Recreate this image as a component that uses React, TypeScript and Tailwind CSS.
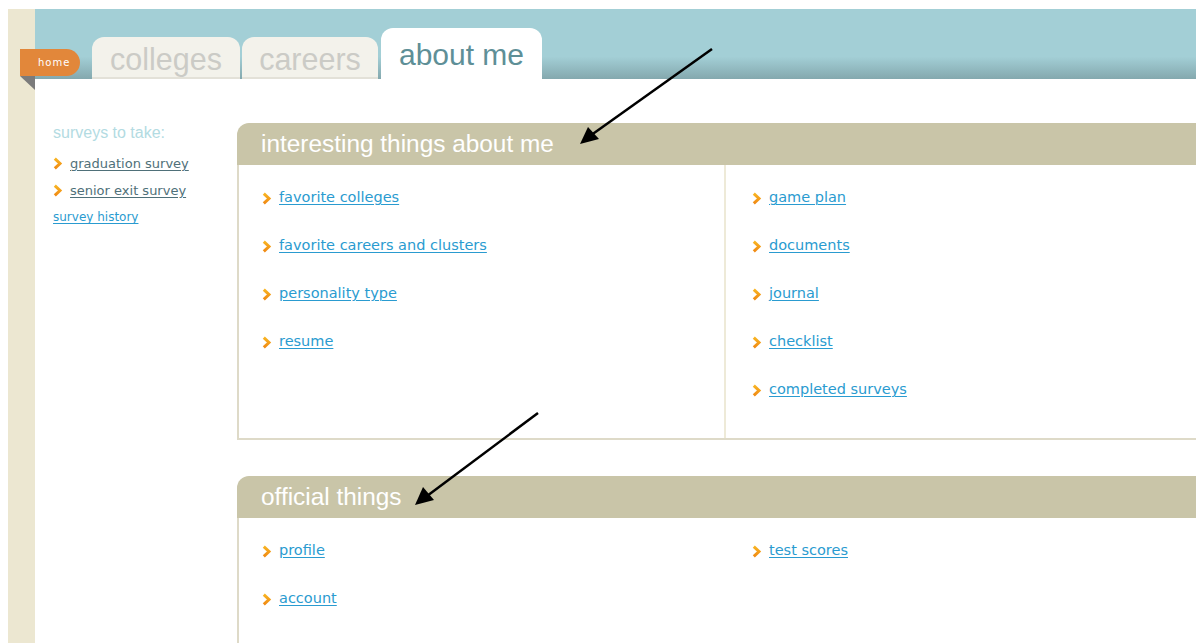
import React from "react";

const Chevron = () => (
  <svg width="10" height="13" viewBox="0 0 10 13" className="shrink-0">
    <defs>
      <linearGradient id="chev" x1="0" y1="0" x2="0" y2="1">
        <stop offset="0" stopColor="#f8b422" />
        <stop offset="1" stopColor="#f08a14" />
      </linearGradient>
    </defs>
    <polyline points="1.8,1.6 7,6.5 1.8,11.4" fill="none" stroke="url(#chev)" strokeWidth="3" strokeLinejoin="miter" />
  </svg>
);

const Item = ({ label }: { label: string }) => (
  <div className="h-[48px] flex items-center">
    <Chevron />
    <a
      href="#"
      className="ml-[7px] text-[14.5px] text-[#2a9bd0] underline underline-offset-2 decoration-1"
      style={{ fontFamily: '"DejaVu Sans", Verdana, sans-serif' }}
    >
      {label}
    </a>
  </div>
);

const Section = ({
  title,
  left,
  right,
  divided,
  bodyClass,
}: {
  title: string;
  left: string[];
  right: string[];
  divided?: boolean;
  bodyClass: string;
}) => (
  <section className="w-[1000px]">
    <div className="h-[42px] bg-[#c9c5a8] rounded-tl-[12px] flex items-center pl-[24px]">
      <h2 className="text-[24.4px] text-white leading-none" style={{ fontFamily: '"Liberation Sans", Arial, sans-serif' }}>
        {title}
      </h2>
    </div>
    <div className={`flex border-l-2 border-[#dedac8] ${bodyClass}`}>
      <div className={`w-[487px] pl-[23px] pt-[9px] ${divided ? "border-r-2 border-[#eeead8]" : ""}`}>
        {left.map((l) => (
          <Item key={l} label={l} />
        ))}
      </div>
      <div className="flex-1 pl-[26px] pt-[9px]">
        {right.map((l) => (
          <Item key={l} label={l} />
        ))}
      </div>
    </div>
  </section>
);

export default function App() {
  return (
    <div
      className="relative w-[1196px] h-[643px] overflow-hidden bg-white pt-[9px] pl-[8px]"
      style={{ fontFamily: '"Liberation Sans", Arial, sans-serif' }}
    >
      <div className="flex h-[634px]">
        {/* left beige rail */}
        <div className="w-[27px] shrink-0 bg-[#ece7d1]" />

        <div className="flex-1 flex flex-col min-w-0">
          {/* banner with tabs */}
          <div className="h-[70px] shrink-0 bg-[linear-gradient(to_bottom,#a3cfd6_0%,#a3cfd6_68%,#84a8ae_100%)] flex items-end pl-[57px]">
            <div className="w-[148px] h-[42px] bg-[#f3f2eb] border-b-2 border-[#e3e1d8] rounded-t-[12px] flex items-center justify-center">
              <span className="text-[30.5px] text-[#cbcbc6] leading-none mt-[4px]">colleges</span>
            </div>
            <div className="ml-[2px] w-[136px] h-[42px] bg-[#f3f2eb] border-b-2 border-[#e3e1d8] rounded-t-[12px] flex items-center justify-center">
              <span className="text-[30.5px] text-[#cbcbc6] leading-none mt-[4px]">careers</span>
            </div>
            <div className="ml-[3px] w-[161px] h-[51px] bg-white rounded-t-[12px] flex items-start justify-center pt-[12px]">
              <span className="text-[30px] text-[#5e8f97] leading-none">about me</span>
            </div>
          </div>

          <div className="flex flex-1 min-h-0">
            {/* sidebar */}
            <aside className="w-[202px] shrink-0 pl-[18px] pt-[45px]">
              <div className="text-[16px] text-[#b3dbe2] leading-[18px]">surveys to take:</div>
              <div
                className="mt-[14px] text-[13px] leading-[15px]"
                style={{ fontFamily: '"DejaVu Sans", Verdana, sans-serif' }}
              >
                <div className="flex items-center h-[15px]">
                  <Chevron />
                  <a href="#" className="ml-[7px] text-[#4f7079] underline underline-offset-2">graduation survey</a>
                </div>
                <div className="flex items-center h-[15px] mt-[12px]">
                  <Chevron />
                  <a href="#" className="ml-[7px] text-[#4f7079] underline underline-offset-2">senior exit survey</a>
                </div>
                <div className="mt-[11px]">
                  <a href="#" className="text-[12px] text-[#2a9bd0] underline underline-offset-2">survey history</a>
                </div>
              </div>
            </aside>

            {/* main sections */}
            <main className="flex-1 pt-[44px] flex flex-col gap-[36px]">
              <Section
                title="interesting things about me"
                left={["favorite colleges", "favorite careers and clusters", "personality type", "resume"]}
                right={["game plan", "documents", "journal", "checklist", "completed surveys"]}
                divided
                bodyClass="h-[275px] border-b-2 border-[#dedac8]"
              />
              <Section
                title="official things"
                left={["profile", "account"]}
                right={["test scores"]}
                bodyClass="h-[200px]"
              />
            </main>
          </div>
        </div>
      </div>

      {/* home flag */}
      <div className="absolute left-[20px] top-[49px] w-[60px] h-[27px] bg-[#e2873a] rounded-r-full flex items-center pl-[18px]">
        <span className="text-[10px] text-white tracking-[1px]" style={{ fontFamily: '"DejaVu Sans", Verdana, sans-serif' }}>
          home
        </span>
      </div>
      <svg className="absolute left-[20px] top-[76px]" width="15" height="14" viewBox="0 0 15 14">
        <polygon points="0,0 15,0 15,14" fill="#7b7b7b" />
      </svg>

      {/* annotation arrows */}
      <svg className="absolute inset-0 pointer-events-none" width="1196" height="643" viewBox="0 0 1196 643">
        <line x1="712" y1="49" x2="592" y2="134.5" stroke="#000" strokeWidth="2.5" />
        <polygon points="580,144 599,139 588,127" fill="#000" />
        <line x1="538" y1="413" x2="427" y2="496" stroke="#000" strokeWidth="2.5" />
        <polygon points="415,505 434,500 423,487" fill="#000" />
      </svg>
    </div>
  );
}
